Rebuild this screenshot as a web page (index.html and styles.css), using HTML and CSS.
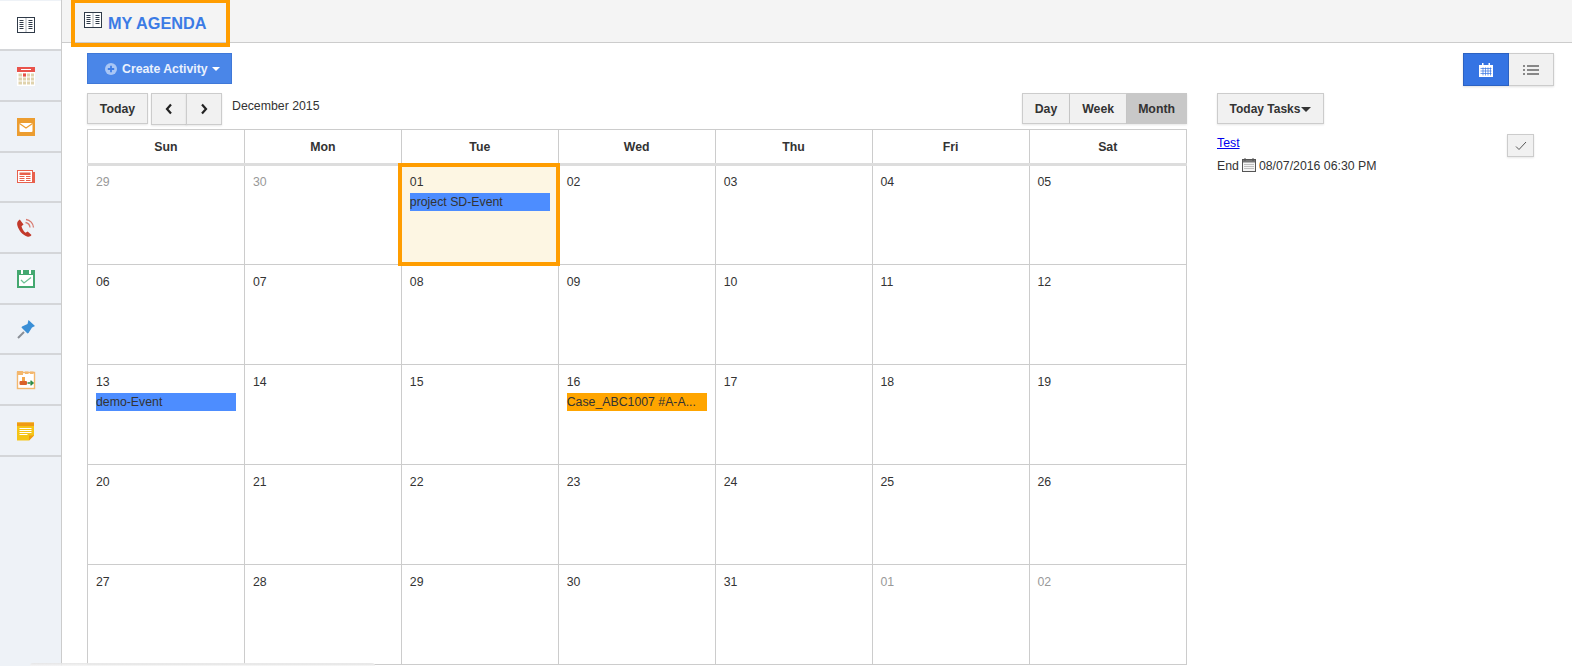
FILE: index.html
```html
<!DOCTYPE html>
<html lang="en">
<head>
<meta charset="utf-8">
<title>My Agenda</title>
<link rel="stylesheet" href="styles.css">
</head>
<body>
<div class="app">
  <nav class="side">
    <a class="side-item active"><svg class="ico" viewBox="0 0 20 20"><rect x="1.500" y="2.500" width="17" height="15" fill="#fff" stroke="#2f3a48" stroke-width="1"/><rect x="9" y="3" width="2" height="14" fill="#d5d8dc"/><path d="M3.500 5.500h4M3.500 7.500h4M3.500 9.500h4M3.500 11.500h4M3.500 13.500h4M12.500 5.500h4M12.500 7.500h4M12.500 9.500h4M12.500 11.500h4M12.500 13.500h4" stroke="#2f3a48" stroke-width="1"/></svg></a>
    <a class="side-item"><svg class="ico" viewBox="0 0 20 20"><rect x="1" y="1" width="18" height="19" fill="#fff"/><rect x="1" y="1" width="18" height="5" fill="#e9534b"/><rect x="5" y="3" width="10" height="1" fill="#fff"/><path d="M2.500 7.500h3.500v3h-3.500zM7 7.500h3v3H7zM11 7.500h3v3h-3zM15 7.500h3v3h-3zM2.500 11.500h3.500v3h-3.500zM7 11.500h3v3H7zM11 11.500h3v3h-3zM15 11.500h3v3h-3zM2.500 15.500h3.500v3h-3.500zM7 15.500h3v3H7zM11 15.500h3v3h-3zM15 15.500h3v3h-3z" fill="#e0d3ad"/><rect x="7" y="7.500" width="3" height="3" fill="#e9534b"/></svg></a>
    <a class="side-item"><svg class="ico" viewBox="0 0 20 20"><rect x="1" y="1" width="18" height="18" fill="#ec9d30"/><rect x="3.500" y="6" width="13" height="9" rx="1" fill="#fff"/><path d="M3.500 6.500l6.500 4.500 6.500-4.500" fill="none" stroke="#ec9d30" stroke-width="1.200"/></svg></a>
    <a class="side-item"><svg class="ico" viewBox="0 0 20 20"><rect x="1.500" y="3.500" width="15" height="12" fill="#fff" stroke="#e8604c" stroke-width="1"/><rect x="16.500" y="5" width="2.500" height="11" fill="#e8604c"/><rect x="3.500" y="5.500" width="11" height="2.500" fill="#e8604c"/><path d="M3.500 9.500h5M3.500 11.500h5M3.500 13.500h5M10 9.500h4.500M10 11.500h4.500M10 13.500h4.500" stroke="#e8604c" stroke-width="1"/></svg></a>
    <a class="side-item"><svg class="ico" viewBox="0 0 20 20"><path d="M3.800 1.500C1.500 2.800.5 5 1.500 8c1.500 4.500 5 9 9.500 10.500 2 .6 3.600 0 4.500-1.500l-3.800-3.500-2.200 1.300C7.500 13.300 6 10.500 5.500 8.200l2-1.700z" fill="#c2392b"/><path d="M9.500 4.500a5.500 5.500 0 0 1 4.500 5M10 1.500a8.500 8.500 0 0 1 7.500 8" fill="none" stroke="#d8796e" stroke-width="1.300"/></svg></a>
    <a class="side-item"><svg class="ico" viewBox="0 0 20 20"><rect x="1" y="1" width="18" height="18" fill="#44a870"/><rect x="3" y="6" width="14" height="11" fill="#fff"/><rect x="5" y="1" width="2" height="4" fill="#fff"/><rect x="13" y="1" width="2" height="4" fill="#fff"/><path d="M5 11l3 3 7-5.500" fill="none" stroke="#6cc194" stroke-width="1.300"/></svg></a>
    <a class="side-item"><svg class="ico" viewBox="0 0 20 20"><path d="M2 19l6-6" stroke="#8a8f96" stroke-width="2"/><path d="M12.500 1l6.500 6-3 1.500-3.500 5.500-1 .5-6-6 .5-1 5.500-2.500z" fill="#3a8fd6"/></svg></a>
    <a class="side-item"><svg class="ico" viewBox="0 0 20 20"><rect x="1.500" y="2.500" width="17" height="16" fill="#fff" stroke="#f3b76d" stroke-width="1.400"/><rect x="1" y="1" width="6" height="4" fill="#f3b76d"/><rect x="9" y="1.500" width="3.500" height="2.500" fill="#f3b76d"/><rect x="14" y="1.500" width="3.500" height="2.500" fill="#f3b76d"/><rect x="6" y="7" width="3" height="4" fill="#f3a64c"/><rect x="3.500" y="11" width="7.500" height="4" rx="1" fill="#d9622b"/><path d="M11.500 13h5M14.500 10.800l2.500 2.200-2.500 2.200" fill="none" stroke="#2e8b47" stroke-width="1.500"/></svg></a>
    <a class="side-item"><svg class="ico" viewBox="0 0 20 20"><path d="M1 1.500h17v13l-5 5H1z" fill="#f5c518"/><rect x="1" y="1.500" width="17" height="3.500" fill="#f09a12"/><path d="M3.500 7.500h12M3.500 9.500h12M3.500 11.500h12M3.500 13.500h8" stroke="#fff" stroke-width="1"/><path d="M18 14.500h-5v5z" fill="#f09a12"/></svg></a>
  </nav>
  <div class="main">
    <header class="top">
      <h1 class="title"><svg class="title-ico" viewBox="0 0 20 20"><rect x="1.500" y="2.500" width="17" height="15" fill="#fff" stroke="#2f3a48" stroke-width="1"/><rect x="9" y="3" width="2" height="14" fill="#d5d8dc"/><path d="M3.500 5.500h4M3.500 7.500h4M3.500 9.500h4M3.500 11.500h4M3.500 13.500h4M12.500 5.500h4M12.500 7.500h4M12.500 9.500h4M12.500 11.500h4M12.500 13.500h4" stroke="#2f3a48" stroke-width="1"/></svg><span>MY AGENDA</span></h1>
    </header>
    <div class="content">
      <div class="action-row">
        <button class="btn-primary"><svg class="plus" viewBox="0 0 12 12"><circle cx="6" cy="6" r="6" fill="#a9c6f5"/><path d="M6 2.800v6.400M2.800 6h6.400" stroke="#3f7ee8" stroke-width="1.800"/></svg>Create Activity<i class="caret caret-white"></i></button>
        <div class="toggle">
          <button class="toggle-btn on"><svg class="t-ico" viewBox="0 0 14 14"><path d="M0 2h3V0h1.500v2h5V0H11v2h3v12H0z" fill="#fff"/><path d="M1.500 5.500h11M1.500 8h11M1.500 10.500h11M4 4.500v8M6.500 4.500v8M9 4.500v8M11.500 4.500v8" stroke="#3574e3" stroke-width=".7"/></svg></button>
          <button class="toggle-btn"><svg class="t-ico-list" viewBox="0 0 16 10"><path d="M0 1h2M4 1h12M0 5h2M4 5h12M0 9h2M4 9h12" stroke="#666" stroke-width="1.600"/></svg></button>
        </div>
      </div>
      <div class="body-row">
        <section class="cal">
          <div class="cal-bar">
            <div class="cal-left">
              <button class="btn today">Today</button>
              <div class="nav-group">
                <button class="btn nav"><svg class="chev" viewBox="0 0 8 12"><path d="M6 1.500L2 6l4 4.500" fill="none" stroke="#222" stroke-width="2.200"/></svg></button><button class="btn nav"><svg class="chev" viewBox="0 0 8 12"><path d="M2 1.500L6 6l-4 4.500" fill="none" stroke="#222" stroke-width="2.200"/></svg></button>
              </div>
              <span class="month-label">December 2015</span>
            </div>
            <div class="views">
              <button class="btn view">Day</button><button class="btn view">Week</button><button class="btn view current">Month</button>
            </div>
          </div>
          <table class="grid">
            <thead>
              <tr><th>Sun</th><th>Mon</th><th>Tue</th><th>Wed</th><th>Thu</th><th>Fri</th><th>Sat</th></tr>
            </thead>
            <tbody>
              <tr>
                <td class="muted"><div class="d">29</div></td>
                <td class="muted"><div class="d">30</div></td>
                <td class="hl"><div class="d">01</div><div class="ev ev-blue">project SD-Event</div></td>
                <td><div class="d">02</div></td><td><div class="d">03</div></td><td><div class="d">04</div></td><td><div class="d">05</div></td>
              </tr>
              <tr>
                <td><div class="d">06</div></td><td><div class="d">07</div></td><td><div class="d">08</div></td><td><div class="d">09</div></td><td><div class="d">10</div></td><td><div class="d">11</div></td><td><div class="d">12</div></td>
              </tr>
              <tr>
                <td><div class="d">13</div><div class="ev ev-blue">demo-Event</div></td>
                <td><div class="d">14</div></td><td><div class="d">15</div></td>
                <td><div class="d">16</div><div class="ev ev-orange">Case_ABC1007 #A-A...</div></td>
                <td><div class="d">17</div></td><td><div class="d">18</div></td><td><div class="d">19</div></td>
              </tr>
              <tr>
                <td><div class="d">20</div></td><td><div class="d">21</div></td><td><div class="d">22</div></td><td><div class="d">23</div></td><td><div class="d">24</div></td><td><div class="d">25</div></td><td><div class="d">26</div></td>
              </tr>
              <tr>
                <td><div class="d">27</div></td><td><div class="d">28</div></td><td><div class="d">29</div></td><td><div class="d">30</div></td><td><div class="d">31</div></td>
                <td class="muted"><div class="d">01</div></td><td class="muted"><div class="d">02</div></td>
              </tr>
            </tbody>
          </table>
        </section>
        <aside class="tasks">
          <button class="btn tasks-btn">Today Tasks<i class="caret caret-dark"></i></button>
          <div class="task">
            <div class="task-text">
              <a class="task-link" href="#">Test</a>
              <div class="task-end">End <svg class="mini-cal" viewBox="0 0 14 14"><rect x=".5" y="1.500" width="13" height="12" fill="#f4f4f4" stroke="#555"/><rect x="1" y="2" width="12" height="2.500" fill="#777"/><path d="M3 0v3M11 0v3" stroke="#555"/><path d="M2.500 6.500h9M2.500 8.500h9M2.500 10.500h9" stroke="#888" stroke-dasharray="1 1"/></svg> 08/07/2016 06:30 PM</div>
            </div>
            <button class="check"><svg class="check-ico" viewBox="0 0 12 10"><path d="M1 5.500l3 3 7-7.500" fill="none" stroke="#555" stroke-width="1"/></svg></button>
          </div>
        </aside>
      </div>
    </div>
  </div>
</div>
<div class="bottom-shadow"></div>
</body>
</html>
```
FILE: styles.css
```css
* { box-sizing: border-box; }
html, body { margin: 0; height: 100%; overflow: hidden; background: #fff; }
body { font-family: "Liberation Sans", Arial, sans-serif; font-size: 12.3px; color: #333; }
button { font-family: inherit; cursor: pointer; }

.app { display: flex; height: 666px; overflow: hidden; }

.side { flex: 0 0 62px; padding-top: .5px; background: #eef2f7; border-right: 1px solid #ccc; }
.side-item { display: flex; align-items: center; justify-content: center; height: 50.7px; border-bottom: 2px solid #d4d6d9; padding-right: 9px; padding-top: 1px; }
.side-item.active { background: #fff; }
.ico { width: 20px; height: 20px; display: block; }

.main { flex: 1; min-width: 0; position: relative; }
.top { height: 44px; background: #f4f4f4; border-bottom: 1px solid #ccc; padding-left: 9px; }
.title { position: relative; width: 159px; height: 48px; margin: -1px 0 0; border: 4px solid #ff9d00; display: flex; align-items: center; padding: 0 0 0 8px; font-size: 16.3px; font-weight: bold; color: #3b7be5; }
.title-ico { width: 20px; height: 20px; margin: -7px 5px 0 0; flex: none; }
.title span { line-height: 20px; margin-top: -1px; }

.content { padding: 10px 18px 0 25px; }
.action-row { display: flex; justify-content: space-between; align-items: flex-start; height: 40px; }

.btn-primary { display: flex; align-items: center; width: 145px; height: 31px; padding: 0 0 0 17px; background: #4a86e8; border: 1px solid #3f78d8; color: #eaf1fd; font-size: 12.3px; font-weight: bold; }
.plus { width: 12px; height: 12px; margin-right: 5px; }
.caret { display: inline-block; width: 0; height: 0; border-left: 4px solid transparent; border-right: 4px solid transparent; }
.caret-white { border-top: 4px solid #fff; margin-left: 4px; }
.caret-dark { border-left-width: 5px; border-right-width: 5px; border-top: 5px solid #333; margin-left: 1px; vertical-align: 1px; }

.toggle { display: flex; box-shadow: 0 1px 2px rgba(0,0,0,.12); }
.toggle-btn { width: 45px; height: 33px; padding: 0; display: flex; align-items: center; justify-content: center; background: #f1f1f1; border: 1px solid #ccc; border-left: 0; }
.toggle-btn.on { width: 46px; background: #3574e3; border: 1px solid #2c62c2; }
.t-ico { width: 14px; height: 14px; }
.t-ico-list { width: 16px; height: 10px; }

.body-row { display: flex; gap: 30px; }
.cal { flex: 0 0 1100px; width: 1100px; min-width: 0; }
.cal-bar { display: flex; justify-content: space-between; align-items: flex-start; height: 36px; }
.cal-left { display: flex; align-items: flex-start; }
.btn { height: 31px; padding: 0; background: #f1f1f1; border: 1px solid #ccc; box-shadow: 0 1px 2px rgba(0,0,0,.1); color: #333; font-size: 12.3px; font-weight: bold; }
.today { width: 61px; }
.nav-group { display: flex; margin-left: 3px; }
.nav { width: 36px; height: 32px; display: flex; align-items: center; justify-content: center; }
.nav + .nav { margin-left: -1px; }
.chev { width: 8px; height: 12px; }
.month-label { margin-left: 10px; line-height: 26px; }
.views { display: flex; }
.view { padding: 0 12px; }
.view + .view { border-left: 0; }
.view.current { padding: 0 11px; background: #c8c8c8; border-color: #c8c8c8; }

.grid { width: 1100px; table-layout: fixed; border-collapse: collapse; }
.grid th { height: 35px; border: 1px solid #ccc; border-bottom: 3px solid #ddd; font-size: 12.3px; font-weight: bold; color: #333; padding: 0; }
.grid th:last-child { width: 157.5px; }
.grid td { position: relative; height: 100px; padding: 8px 8px 0 8px; border: 1px solid #ccc; vertical-align: top; }
.grid tbody tr:first-child td { padding-top: 7px; }
.d { line-height: 18px; height: 20px; }
.muted .d { color: #999; }
.ev { height: 18px; line-height: 18px; white-space: nowrap; }
.ev-blue { background: #4d8dff; color: #333; }
.ev-orange { background: #ffa500; color: #333; }
.hl { background: #fdf6e3; }
.hl::after { content: ""; position: absolute; left: -4px; top: -3px; right: -2px; bottom: -2px; border: 4px solid #ff9d00; pointer-events: none; }

.tasks { flex: 1; }
.tasks-btn { display: block; width: 107px; height: 31px; font-size: 12px; }
.task { display: flex; justify-content: space-between; align-items: flex-start; margin-top: 10px; }
.task-link { color: #0000ee; line-height: 17px; margin-top: 1px; display: block; width: max-content; }
.task-end { margin-top: 7px; line-height: 14px; display: flex; align-items: center; gap: 3px; }
.mini-cal { width: 14px; height: 14px; margin-top: -3px; }
.check { width: 27px; height: 23px; padding: 0; margin-right: 20px; display: flex; align-items: center; justify-content: center; background: #f1f1f1; border: 1px solid #ccc; box-shadow: 0 1px 2px rgba(0,0,0,.1); }
.check-ico { width: 12px; height: 10px; }

.bottom-shadow { position: fixed; left: 30px; bottom: 0; width: 345px; height: 3px; background: linear-gradient(#e4e4e4, #f6f6f6); border-radius: 3px 3px 0 0; opacity: .9; }
```
